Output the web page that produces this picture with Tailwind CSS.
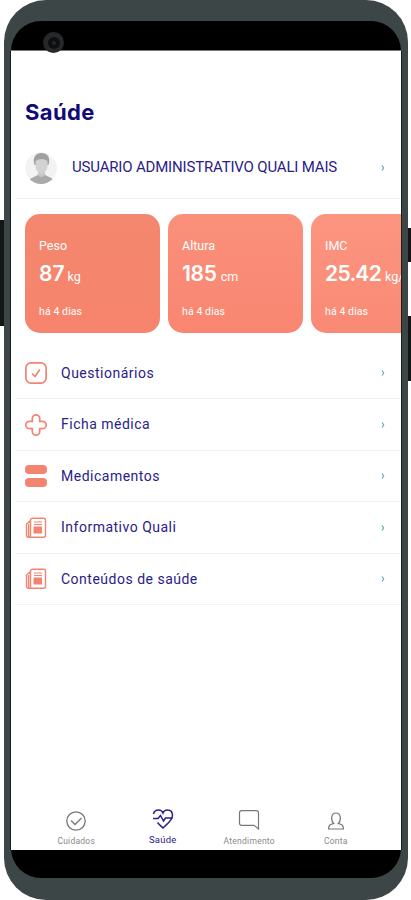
<!DOCTYPE html>
<html lang="pt-BR">

<head>
    <meta charset="UTF-8">
    <meta name="viewport" content="width=device-width, initial-scale=1.0">
    <title>Saúde</title>
    <script src="https://cdn.jsdelivr.net/npm/@tailwindcss/browser@4"></script>
</head>

<body class="w-[411px] h-[900px] overflow-hidden bg-white font-['Roboto',sans-serif] text-[#2a2188]">
    <div class="relative w-[411px] h-[900px] pl-1 pr-[3px]">
        <!-- side buttons -->
        <span class="absolute left-0 top-[220px] w-1 h-[106px] bg-[#111617]"></span>
        <span class="absolute left-[408px] top-[228px] w-[3px] h-[34px] bg-[#111617]"></span>
        <span class="absolute left-[408px] top-[316px] w-[3px] h-[65px] bg-[#111617]"></span>

        <div class="w-[404px] h-[900px] rounded-[42px] bg-[#3d4647] px-[7px] pt-[21px] pb-[22px]">
            <div class="relative h-full rounded-[30px] bg-black pt-[29px] pb-7">
                <span class="absolute left-[32px] top-[11px] w-[21px] h-[21px] rounded-full bg-[#262829] flex items-center justify-center z-10">
                    <span class="w-3 h-3 rounded-full bg-[#0d1011] flex items-center justify-center"><span class="w-1 h-1 rounded-full bg-[#23282a]"></span></span>
                </span>

                <div class="h-full -mx-px bg-white overflow-hidden flex flex-col border-x border-[#182022] border-t border-t-[#777]">
                    <h1 class="mt-[46px] ml-[14px] h-[30px] leading-[30px] font-['Inter',sans-serif] font-bold text-[22px] tracking-[0.4px] text-[#120a78]">Saúde</h1>

                    <div class="mt-[10px] ml-1 h-[62px] flex items-center border-b border-[#f2f2f4] pl-[10px] pr-[16px]">
                        <svg class="w-8 h-8 shrink-0" viewBox="0 0 32 32">
                            <defs><clipPath id="avatar"><circle cx="16" cy="16" r="16" /></clipPath></defs>
                            <g clip-path="url(#avatar)">
                                <circle cx="16" cy="16" r="16" fill="#f3f3f3" />
                                <path d="M4 32c0-5 2-6 7-8l3-2h5l3 2c5 2 7 3 7 8z" fill="#a9a9a9" />
                                <path d="M13 17h7v6q-3.500 4-7 0z" fill="#c9c9c9" />
                                <path d="M9.500 13C7 5 11 1 16.500 1S26 5 23.500 13z" fill="#a0a0a0" />
                                <path d="M10.500 9q6-4 12 0v5c0 4-3 7.500-6 7.500s-6-3.500-6-7.500z" fill="#d2d2d2" />
                            </g>
                        </svg>
                        <p class="ml-[15px] flex-1 whitespace-nowrap text-[15px] tracking-[-0.18px]">USUARIO ADMINISTRATIVO QUALI MAIS</p>
                        <svg class="w-1 h-[6px]" viewBox="0 0 4 6" fill="none" stroke="#62aab9" stroke-width="1.2"><path d="M1 .5 2.700 3 1 5.500" /></svg>
                    </div>

                    <div class="mt-[15px] ml-[14px] flex gap-2 shrink-0 text-white">
                        <div class="w-[135px] h-[119px] shrink-0 rounded-[15px] bg-linear-to-b from-[#f4876f] to-[#f7846c] pl-[14px]">
                            <p class="mt-[23px] h-[18px] leading-[18px] text-[12.500px]">Peso</p>
                            <p class="mt-[5px] h-7 leading-7 whitespace-nowrap"><span class="font-['Inter',sans-serif] font-semibold text-[21px]">87</span><span class="ml-[3px] text-[12.500px]">kg</span></p>
                            <p class="mt-4 h-4 leading-4 text-[10.500px] tracking-[0.1px]">há 4 dias</p>
                        </div>
                        <div class="w-[135px] h-[119px] shrink-0 rounded-[15px] bg-linear-to-b from-[#fa907b] to-[#f98671] pl-[14px]">
                            <p class="mt-[23px] h-[18px] leading-[18px] text-[12.500px]">Altura</p>
                            <p class="mt-[5px] h-7 leading-7 whitespace-nowrap"><span class="font-['Inter',sans-serif] font-semibold text-[21px] tracking-[-0.3px]">185</span><span class="ml-1 text-[12.500px]">cm</span></p>
                            <p class="mt-4 h-4 leading-4 text-[10.500px] tracking-[0.1px]">há 4 dias</p>
                        </div>
                        <div class="w-[135px] h-[119px] shrink-0 rounded-[15px] bg-linear-to-b from-[#fc9580] to-[#f98a75] pl-[14px]">
                            <p class="mt-[23px] h-[18px] leading-[18px] text-[12.500px]">IMC</p>
                            <p class="mt-[5px] h-7 leading-7 whitespace-nowrap"><span class="font-['Inter',sans-serif] font-semibold text-[21px] tracking-[-0.700px]">25.42</span><span class="ml-1 text-[12.500px]">kg/</span></p>
                            <p class="mt-4 h-4 leading-4 text-[10.500px] tracking-[0.1px]">há 4 dias</p>
                        </div>
                    </div>

                    <ul class="mt-[14px] ml-1 text-[14px] tracking-[0.5px]">
                        <li class="h-[52px] flex items-center border-b border-[#f2f2f4] pl-[10px] pr-[16px]">
                            <svg class="w-[22px] h-[22px]" viewBox="0 0 22 22" fill="none" stroke="#f38472" stroke-width="1.700"><rect x=".9" y=".9" width="20.200" height="20.200" rx="5" /><path d="m7 11.500 3 3 4.800-7" /></svg>
                            <span class="mt-px ml-[14px] flex-1">Questionários</span>
                            <svg class="w-1 h-[6px]" viewBox="0 0 4 6" fill="none" stroke="#62aab9" stroke-width="1.2"><path d="M1 .5 2.700 3 1 5.500" /></svg>
                        </li>
                        <li class="h-[52px] flex items-center border-b border-[#f2f2f4] pl-[10px] pr-[16px]">
                            <svg class="w-[22px] h-[22px]" viewBox="0 0 22 22" fill="none" stroke="#f38472" stroke-width="1.700"><path d="M7.300 4.500a3.700 3.700 0 0 1 7.400 0v2.800h2.800a3.700 3.700 0 0 1 0 7.400h-2.800v2.800a3.700 3.700 0 0 1-7.400 0v-2.800H4.500a3.700 3.700 0 0 1 0-7.400h2.800z" /></svg>
                            <span class="ml-[14px] flex-1">Ficha médica</span>
                            <svg class="w-1 h-[6px]" viewBox="0 0 4 6" fill="none" stroke="#62aab9" stroke-width="1.2"><path d="M1 .5 2.700 3 1 5.500" /></svg>
                        </li>
                        <li class="h-[51px] flex items-center border-b border-[#f2f2f4] pl-[10px] pr-[16px]">
                            <svg class="w-[22px] h-[22px]" viewBox="0 0 22 22" fill="#f38472"><rect y="0" width="22" height="9" rx="4" /><rect y="13" width="22" height="9" rx="4" /></svg>
                            <span class="ml-[14px] flex-1">Medicamentos</span>
                            <svg class="w-1 h-[6px]" viewBox="0 0 4 6" fill="none" stroke="#62aab9" stroke-width="1.2"><path d="M1 .5 2.700 3 1 5.500" /></svg>
                        </li>
                        <li class="h-[52px] flex items-center border-b border-[#f2f2f4] pl-[10px] pr-[16px]">
                            <svg class="w-[22px] h-[22px]" viewBox="0 0 22 22" fill="none" stroke="#f38472" stroke-width="1.400"><path d="M5.500 20.300V3.200a2 2 0 0 1 2-2h11a2 2 0 0 1 2 2v15.100a2 2 0 0 1-2 2H3.500a2 2 0 0 1-2-2V7l4-3.500M3.600 7v13" /><path d="M9 5h8M9 7.500h8" stroke-width="1" /><path d="M8.500 9.500h8.500v7H8.500z" fill="#f38472" stroke="none" /></svg>
                            <span class="ml-[14px] flex-1">Informativo Quali</span>
                            <svg class="w-1 h-[6px]" viewBox="0 0 4 6" fill="none" stroke="#62aab9" stroke-width="1.2"><path d="M1 .5 2.700 3 1 5.500" /></svg>
                        </li>
                        <li class="h-[51px] flex items-center border-b border-[#f2f2f4] pl-[10px] pr-[16px]">
                            <svg class="w-[22px] h-[22px]" viewBox="0 0 22 22" fill="none" stroke="#f38472" stroke-width="1.400"><path d="M5.500 20.300V3.200a2 2 0 0 1 2-2h11a2 2 0 0 1 2 2v15.100a2 2 0 0 1-2 2H3.500a2 2 0 0 1-2-2V7l4-3.500M3.600 7v13" /><path d="M9 5h8M9 7.500h8" stroke-width="1" /><path d="M8.500 9.500h8.500v7H8.500z" fill="#f38472" stroke="none" /></svg>
                            <span class="ml-[14px] flex-1">Conteúdos de saúde</span>
                            <svg class="w-1 h-[6px]" viewBox="0 0 4 6" fill="none" stroke="#62aab9" stroke-width="1.2"><path d="M1 .5 2.700 3 1 5.500" /></svg>
                        </li>
                    </ul>

                    <nav class="mt-auto px-[22px] h-[42px] grid grid-cols-4 text-[8.500px] leading-[10px] tracking-[0.25px] text-[#898989]">
                        <a class="flex flex-col items-center">
                            <svg class="mt-[3px] w-5 h-5" viewBox="0 0 20 20" fill="none" stroke="#777" stroke-width="1.300"><circle cx="10" cy="10" r="9.200" /><path d="m5 9.500 4 4L15.500 7" /></svg>
                            <span class="mt-[5px]">Cuidados</span>
                        </a>
                        <a class="flex flex-col items-center text-[#2a2188]">
                            <svg class="mt-[1px] w-[22px] h-5" viewBox="0 0 22 20" fill="none" stroke="#2a2188" stroke-width="1.500"><path d="M1.500 5C2 2.500 4 1 6.500 1 9 1 10.500 2.500 11 4c.5-1.500 2-3 4.500-3C18.500 1 20.500 3 20.500 6.500c0 5-6 9-9.500 12.500-2-2-4-3.500-5.500-5.500" /><path d="M1 9.500h5l2.500-3 3 5.500 2-3h7" /></svg>
                            <span class="mt-[6px] text-[9.500px]">Saúde</span>
                        </a>
                        <a class="flex flex-col items-center">
                            <svg class="mt-[2px] w-[22px] h-5" viewBox="0 0 22 20" fill="none" stroke="#777" stroke-width="1.200"><path d="M3.500.7h15a2 2 0 0 1 2 2V19l-4.500-3.700H3.500a2 2 0 0 1-2-2V2.700a2 2 0 0 1 2-2z" /></svg>
                            <span class="mt-[6px]">Atendimento</span>
                        </a>
                        <a class="flex flex-col items-center">
                            <svg class="mt-[4px] w-[18px] h-[18px]" viewBox="0 0 18 18" fill="none" stroke="#777" stroke-width="1.200"><path d="M6.500 11.500C3.500 8 4 1 9 1s5.500 7 2.500 10.500c3 .8 5 1.500 5 5.500h-15c0-4 2-4.700 5-5.500zm0 0 1 .5m4-.5-1 .5" /></svg>
                            <span class="mt-[6px]">Conta</span>
                        </a>
                    </nav>
                </div>
            </div>
        </div>
    </div>
</body>

</html>
